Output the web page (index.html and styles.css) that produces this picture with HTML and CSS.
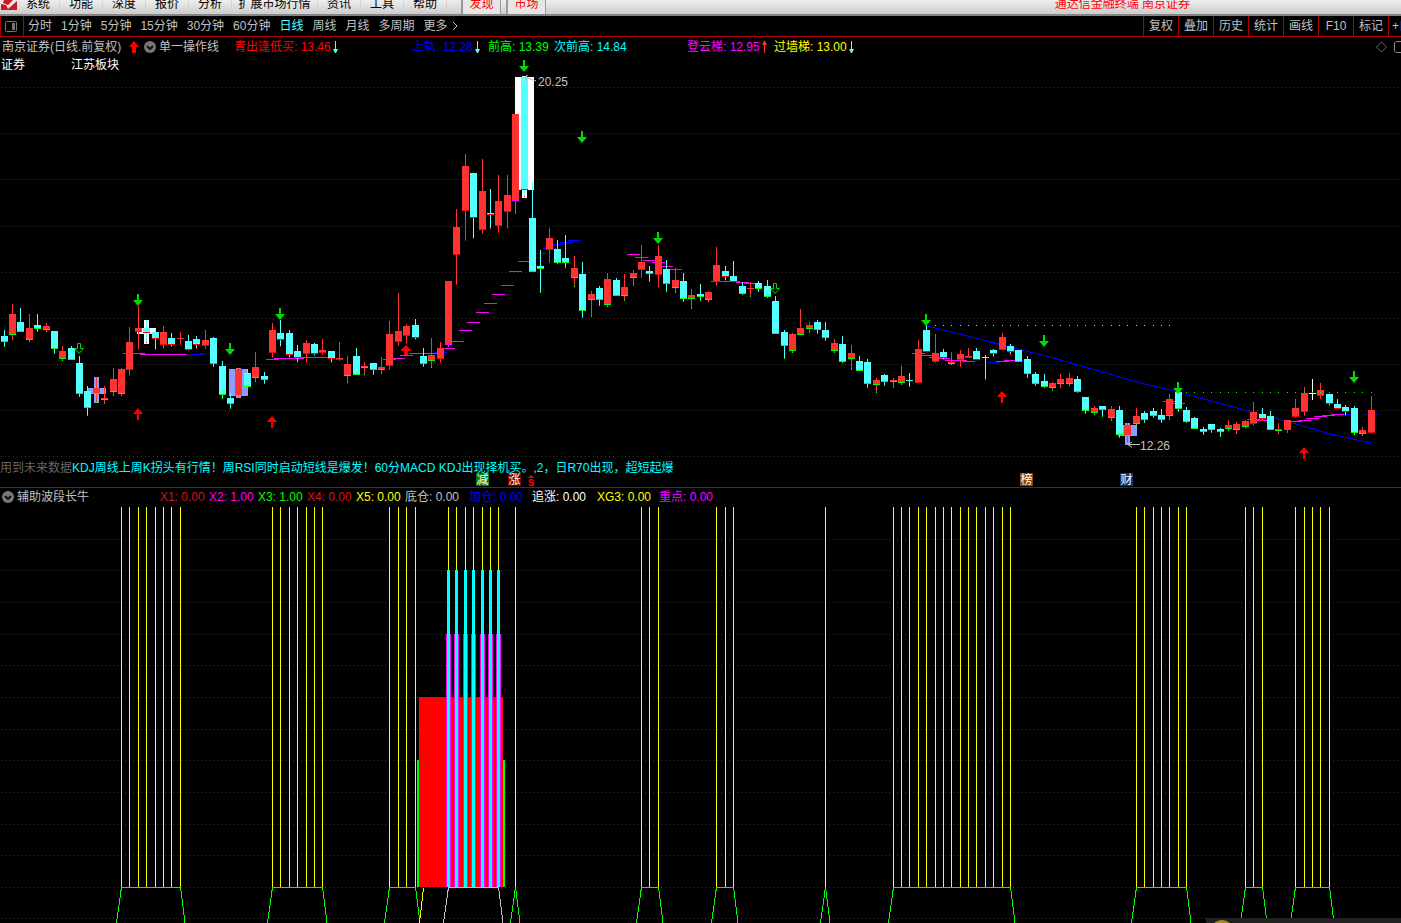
FILE: index.html
```html
<!DOCTYPE html>
<html lang="zh-CN">
<head>
<meta charset="utf-8">
<title>通达信金融终端 南京证券</title>
<link rel="stylesheet" href="styles.css">
</head>
<body>
<header class="menubar">
  <svg class="logo" width="17" height="11" viewBox="0 0 17 11" aria-hidden="true">
    <path fill="#cf1722" d="M1 0H17V10H1z"/>
    <path fill="#e8e8e8" d="M0 0H4L3 3L8 5L13 0H17V1L8 9L6 5L1 4z"/>
  </svg>
  <nav class="menu">
    <button>系统</button><button>功能</button><button>深度</button><button>报价</button><button>分析</button><button class="wide">扩展市场行情</button><button>资讯</button><button>工具</button><button>帮助</button>
  </nav>
  <div class="hot"><button>发现</button><button>市场</button></div>
  <h1 class="title">通达信金融终端 南京证券</h1>
</header>

<div class="toolbar">
  <button class="layout-toggle" aria-label="切换布局">
    <svg width="12" height="11" viewBox="0 0 12 11"><rect x=".5" y=".5" width="11" height="10" rx="1" fill="none" stroke="#777"/><path fill="#777" d="M7 2h3v7H7z"/></svg>
  </button>
  <nav class="periods">
    <button>分时</button><button>1分钟</button><button>5分钟</button><button>15分钟</button><button>30分钟</button><button>60分钟</button><button class="active">日线</button><button>周线</button><button>月线</button><button>多周期</button><button>更多<svg class="chev" width="6" height="10" viewBox="0 0 6 10"><path d="M1 1l4 4-4 4" fill="none" stroke="#c0c0c0"/></svg></button>
  </nav>
  <div class="tools">
    <button>复权</button><button>叠加</button><button>历史</button><button>统计</button><button>画线</button><button>F10</button><button>标记</button><button class="cut">+自</button>
  </div>
</div>

<main>
<section class="panel price">
  <div class="legend legend-price">
    <span>南京证券(日线.前复权)</span>
    <svg width="10" height="12" viewBox="0 0 10 12"><path fill="#f00" d="M5 0l5 6H7v6H3V6H0z"/></svg>
    <svg width="12" height="12" viewBox="0 0 12 12"><circle cx="6" cy="6" r="6" fill="#777"/><path d="M3 5l3 3 3-3" fill="none" stroke="#111" stroke-width="2"/></svg>
    <span>单一操作线</span>
    <span class="red">青出逢低买: 13.46<svg class="tick" width="5" height="12" viewBox="0 0 5 12"><path fill="#5ff" d="M2 0h1v8h2L3 12H2L0 8h2z"/></svg></span>
    <span class="blue">上轨: 12.28<svg class="tick" width="5" height="12" viewBox="0 0 5 12"><path fill="#5ff" d="M2 0h1v8h2L3 12H2L0 8h2z"/></svg></span>
    <span class="green">前高: 13.39</span>
    <span class="cyan">次前高: 14.84</span>
    <span class="magenta">登云梯: 12.95<svg class="tick" width="5" height="12" viewBox="0 0 5 12"><path fill="#f33" d="M2 12h1V4h2L3 0H2L0 4h2z"/></svg></span>
    <span class="yellow">过墙梯: 13.00<svg class="tick" width="5" height="12" viewBox="0 0 5 12"><path fill="#5ff" d="M2 0h1v8h2L3 12H2L0 8h2z"/></svg></span>
    <svg class="corner" width="25" height="12" viewBox="0 0 25 12"><path d="M5.500 1l5 5-5 5-5-5z" fill="none" stroke="#666"/><path d="M25 .5h-5l-1.500 1.500v8l1.500 1.500h5" fill="none" stroke="#888"/></svg>
  </div>
  <div class="plot">
    <svg id="price-chart" viewBox="0 56 1401 431" role="img" aria-label="日线K线图"></svg>
    <div class="tags"><span>证券</span><span>江苏板块</span></div>
    <p class="notice"><span>用到未来数据</span>KDJ周线上周K拐头有行情！周RSI同时启动短线是爆发！60分MACD KDJ出现择机买。,2，日R70出现，超短起爆</p>
  </div>
</section>

<section class="panel">
  <div class="legend legend-wave">
    <svg width="12" height="12" viewBox="0 0 12 12"><circle cx="6" cy="6" r="6" fill="#777"/><path d="M3 5l3 3 3-3" fill="none" stroke="#111" stroke-width="2"/></svg>
    <span>辅助波段长牛</span>
    <span class="crimson">X1: 0.00</span>
    <span class="magenta">X2: 1.00</span>
    <span class="green">X3: 1.00</span>
    <span class="crimson">X4: 0.00</span>
    <span class="yellow">X5: 0.00</span>
    <span>底仓: 0.00</span>
    <span class="blue">加仓: 0.00</span>
    <span class="white">追涨: 0.00</span>
    <span class="yellow">XG3: 0.00</span>
    <span class="magenta">重点: 0.00</span>
  </div>
  <div class="plot"><svg id="wave-chart" viewBox="0 505 1401 418" role="img" aria-label="辅助波段长牛"></svg></div>
</section>
</main>
<script src="chart.js"></script>
</body>
</html>
```

FILE: styles.css
```css
* { box-sizing: border-box; }
body {
  margin: 0;
  min-height: 100vh;
  overflow: hidden;
  background: #000;
  color: #c0c0c0;
  font: 12px/16px "Liberation Sans", "Noto Sans CJK SC", sans-serif;
}
button {
  margin: 0;
  padding: 0;
  border: 0;
  background: none;
  color: inherit;
  font: inherit;
  white-space: nowrap;
}
svg { display: block; }

.menubar {
  display: flex;
  height: 16px;
  overflow: hidden;
  background: linear-gradient(#eee, #ccc);
  border-bottom: 2px solid #858585;
  color: #000;
}
.logo { flex: none; }
.menu, .hot { display: flex; flex: none; }
.menu button { width: 43px; height: 16px; margin-top: -4px; border-right: 1px solid #d4d4d4; }
.menu .wide { width: 86px; }
.hot { margin-left: 14px; gap: 5px; color: #f00; }
.hot button {
  width: 40px;
  height: 18px;
  margin-top: -4px;
  padding-bottom: 2px;
  background: #e6e6e6;
  border-left: 2px solid #999;
  border-right: 1px solid #999;
}
.title {
  margin: -4px 211px 0 auto;
  color: #f00;
  font: inherit;
  white-space: nowrap;
}

.toolbar {
  display: flex;
  height: 21px;
  border-bottom: 1px solid #b00000;
  border-left: 1px solid #b00000;
  overflow: hidden;
}
.layout-toggle { width: 23px; padding-left: 4px; border-right: 1px solid #b00000; }
.periods { display: flex; gap: 9px; padding-left: 4px; }
.periods button { display: flex; align-items: center; }
.periods .chev { margin-left: 4px; }
.active { color: #5ff; }
.tools { display: flex; margin-left: auto; }
.tools button { width: 35px; border-left: 1px solid #b00000; }
.tools .cut { width: 13px; padding-left: 3px; overflow: hidden; text-align: left; }

.panel { border-bottom: 1px solid #b00000; }
.panel:last-child { border: 0; }
.legend { display: grid; align-items: center; height: 19px; white-space: nowrap; }
.legend span { display: flex; align-items: center; }
.legend .tick { margin-left: 2px; }
.legend-price {
  padding-left: 2px;
  grid-template-columns: 127px 15px 15px 75px 178px 76px 66px 133px 87px 1fr 25px;
}
.legend-wave {
  height: 17px;
  padding-left: 2px;
  grid-template-columns: 15px 143px 49px 49px 49px 49px 49px 64px 63px 65px 62px 1fr;
}
.red { color: #f00; }
.crimson { color: #d81414; }
.blue { color: #00f; }
.green { color: #0f0; }
.cyan { color: #0ff; }
.magenta { color: #f0f; }
.yellow { color: #ff0; }
.white { color: #fff; }

.plot { position: relative; }
.plot > svg { width: 100%; height: auto; }
.tags { position: absolute; top: 1px; left: 1px; display: flex; gap: 46px; color: #fff; }
.notice { position: absolute; bottom: 11px; left: 0; margin: 0; color: #0ff; white-space: nowrap; }
.notice span { color: #666; }

.value { fill: #c0c0c0; font-size: 12px; }
.badge { fill: #fff; font-size: 12px; text-anchor: middle; }
.sell { fill: #f00; font-size: 12px; font-weight: bold; text-anchor: middle; }
```

FILE: chart.js
```js
const NS = 'http://www.w3.org/2000/svg';
const RED = '#ff3232', CYAN = '#54ffff';

function add(svg, tag, attrs, text) {
  const el = document.createElementNS(NS, tag);
  for (const key in attrs) el.setAttribute(key, attrs[key]);
  if (text) el.textContent = text;
  svg.appendChild(el);
}
function rect(svg, x, y, width, height, fill) {
  add(svg, 'rect', { x, y, width, height, fill, 'shape-rendering': 'crispEdges' });
}
function line(svg, x1, y1, x2, y2, stroke) {
  add(svg, 'line', { x1, y1, x2, y2, stroke, 'shape-rendering': 'crispEdges' });
}
function gridRow(svg, y) {
  add(svg, 'path', { d: `M1 ${y + 0.5}H1399`, stroke: '#b00000', 'stroke-dasharray': '1 3', 'shape-rendering': 'crispEdges' });
}
const barX = i => Math.floor(4.1 + 8.3865 * i);

/* one bar per entry: kind + base colour, high, body top, body bottom, low */
const bars = `
cg 330 336 342 347|rg 304 314 335 340|cg 308 322 332 332|rg 314 328 340 342|cg 314 325 329 332|rg 323 326 330 332|cg 331 331 349 354|rg 346 351 359 361|cg 346 348 360 360|cg 356 363 394 397
cg 386 391 408 416|rg 377 388 394 403|rg 386 398 400 404|rg 368 379 392 396|rg 368 369 394 396|rr 327 342 370 376|rr 306 328 332 350|cr 320 328 333 343|cr 329 332 339 350|rr 326 332 345 349
cr 333 338 345 347|rr 332 338 339 345|cr 335 341 350 351|cr 336 339 345 349|rr 330 340 346 349|cg 337 338 364 367|cg 361 366 395 399|cg 393 398 404 409|rg 368 369 396 398|cg 369 373 387 389
rg 352 367 378 382|cg 372 376 380 384|rr 323 330 353 358|cr 320 333 340 347|cr 330 333 355 358|cr 345 351 358 363|rr 340 343 354 363|cr 343 344 354 356|rr 339 350 353 355|cr 351 351 359 363
rr 342 358 360 361|rg 356 364 376 383|cg 348 356 375 375|rg 362 366 368 375|cg 363 363 370 375|rg 357 367 370 374|rr 321 334 366 370|rr 293 331 342 346|rr 324 326 336 344|cr 319 325 338 340
cg 348 356 364 367|rg 338 355 361 368|rr 342 348 359 363|rm 281 281 345 347|rr 209 227 255 285|rr 154 166 211 241|cr 173 173 218 239|rr 159 191 230 234|cr 189 213 215 229|rr 175 201 226 233
rr 175 195 212 229|rm 114 114 201 214|cr 77 77 190 197|cg 182 218 272 272|cg 250 266 269 293|rr 228 238 250 263|cg 240 249 263 264|cg 235 258 263 268|rg 256 268 278 287|cg 262 274 311 318
rg 291 294 300 317|cg 286 288 300 306|rg 273 279 305 307|cg 278 280 296 296|rg 274 287 296 301|rg 270 273 278 286|rr 245 262 270 278|cg 266 271 274 282|rr 245 256 275 288|cg 260 269 284 292
rg 268 280 288 293|cg 273 281 299 302|rg 289 295 299 309|cg 284 294 297 301|rg 291 292 300 302|rr 247 265 282 286|cr 266 271 277 281|cr 261 276 282 282|cg 282 286 294 295|rg 282 288 289 297
cg 281 283 289 292|cg 280 286 297 298|cg 296 301 334 334|cg 330 332 346 359|rg 333 334 351 353|rg 309 328 335 335|rg 322 325 329 333|cg 320 322 330 334|cg 322 330 338 341|rg 339 343 351 353
cg 336 344 362 363|rg 345 353 359 370|cg 356 361 371 371|cg 359 362 384 388|rg 378 380 385 393|cg 374 375 382 386|rg 378 380 382 388|rg 366 376 383 385|cg 373 380 381 387|rr 340 349 383 383
cr 325 330 352 353|rr 334 353 362 363|cr 349 352 358 360|rg 352 362 364 365|rr 350 354 360 367|rr 348 356 358 358|cr 348 351 360 360|cr 355 357 358 380|cr 349 350 354 357|rr 333 337 350 350
cr 344 346 352 355|cg 350 350 362 362|cg 356 359 374 378|cg 372 374 384 386|cg 374 381 387 388|rg 382 383 388 391|rg 374 379 384 388|rg 373 378 384 386|cg 376 379 392 393|cg 397 397 411 414
rg 406 408 413 415|cg 406 406 410 417|rg 406 409 418 421|cg 406 410 435 438|rg 423 425 436 443|rg 408 416 424 425|cg 411 413 420 423|cg 408 411 416 418|cg 409 415 420 423|rg 394 399 416 420
cg 392 392 409 412|cg 407 410 422 423|cg 417 418 429 429|cg 427 429 432 435|cg 424 424 430 433|cg 428 429 432 437|rg 420 425 429 431|rg 422 424 430 434|rg 420 421 427 428|rr 402 412 424 426
cr 408 414 419 421|cg 411 416 430 430|rg 423 429 431 434|rm 420 420 430 433|rr 399 408 417 418|rr 387 393 412 416|ww 379 393 394 400|rr 383 390 396 399|cr 394 394 404 406|cr 399 404 409 409
cr 405 407 412 416|cg 406 408 433 435|rg 427 430 434 436|rr 396 410 433 434`
  .trim().split(/[\n|]/).map(s => s.split(' '));

const price = document.getElementById('price-chart');
[87, 133, 179, 226, 272, 318, 364, 410, 456].forEach(y => gridRow(price, y));

/* highlighted bars */
[
  [137, 328, 19, 6, '#fff'], [144, 320, 5, 24, '#fff'],
  [87, 388, 19, 6, '#8c9cff'], [94, 377, 5, 26, '#8c9cff'],
  [229, 369, 19, 27, '#8c9cff'], [236, 368, 5, 30, '#8c9cff'],
  [515, 77, 19, 113, '#fff'], [522, 76, 5, 122, '#fff'],
  [1118, 425, 19, 11, '#8c9cff'], [1125, 423, 5, 22, '#8c9cff']
].forEach(r => rect(price, ...r));

/* falling trend line */
add(price, 'path', { d: 'M927 326L1050 357L1137 382L1178 392L1215 402L1282 420L1330 434L1371 443', fill: 'none', stroke: '#00f', 'shape-rendering': 'crispEdges' });

/* ladder steps: x1, x2, y */
const magenta = [[123,145,353],[140,187,354],[266,279,359],[274,304,358],[300,328,357],[383,396,359],[393,405,358],[400,413,355],[409,437,353],[443,455,348],[451,464,341],[459,472,330],[467,480,322],[476,489,312],[484,497,303],[492,505,294],[501,514,285],[509,522,271],[518,531,261],[627,640,254],[635,648,257],[643,656,260],[652,665,262],[660,673,266],[669,682,269],[711,740,281],[736,749,282],[744,757,283],[912,925,353],[921,933,355],[929,940,357],[937,950,358],[945,967,360],[962,975,361],[996,1009,361],[1004,1017,360],[1163,1177,401],[1173,1185,403],[1247,1260,419],[1256,1267,420],[1290,1302,421],[1298,1311,420],[1306,1319,418],[1314,1327,416],[1322,1335,415],[1331,1344,414]];
const blue = [[191,204,354],[199,210,353],[434,447,352],[526,539,257],[534,547,253],[543,556,248],[552,564,244],[560,573,242],[568,581,240],[987,1000,362],[1015,1023,360],[1343,1351,414],[1365,1378,414]];
blue.forEach(([a, b, y]) => rect(price, a, y, b - a, 1, '#00f'));
magenta.forEach(([a, b, y]) => rect(price, a, y, b - a, 1, '#f0f'));

const fills = { c: CYAN, r: RED, w: '#fff' };
const bases = { g: '#0f0', r: '#f00', m: '#f0f', w: '#fff' };
bars.forEach(([kind, ...v], i) => {
  const [high, top, bottom, low] = v.map(Number);
  const x = barX(i), fill = fills[kind[0]], base = bases[kind[1]];
  rect(price, x, high, 1, low - high, fill);
  if (low > bottom) rect(price, x, low - 1, 1, 1, base);
  rect(price, x - 3, top, 7, bottom - top, fill);
  if (bottom - top > 1) rect(price, x - 3, bottom - 1, 7, 1, base);
});

for (let i = 111; i < 140; i++) rect(price, barX(i), 325, 1, 1, '#54ffff');
for (let i = 141; i < 164; i++) rect(price, barX(i), 392, 1, 1, '#0f0');

/* signals */
[[138,294],[230,343],[280,308],[524,60],[582,131],[658,232],[926,314],[1044,335],[1178,382],[1354,371]].forEach(([x, y]) =>
  add(price, 'path', { d: `M${x - 1} ${y}h2v6h4l-5 6l-5 -6h4z`, fill: '#00dc00' }));
[[138,408],[272,416],[1002,391],[1304,447]].forEach(([x, y]) =>
  add(price, 'path', { d: `M${x} ${y}l5 6h-4v6h-2v-6h-4z`, fill: '#f00' }));
add(price, 'path', { d: 'M406 345l5 5v1h-3v4h-4v-4h-3v-1z', fill: '#f00' });
[[79,343],[775,283]].forEach(([x, y]) =>
  add(price, 'path', { d: `M${x - 1.5} ${y + 0.5}h3v5h3l-4.500 5l-4.500 -5h3z`, fill: 'none', stroke: '#00dc00' }));

/* extremes */
add(price, 'path', { d: 'M536 81L525 77M528 75l-3 2l2 4M1140 444.500H1128M1132 442l-4 2.500l4 3', fill: 'none', stroke: '#c0c0c0' });
add(price, 'text', { x: 538, y: 86, class: 'value' }, '20.25');
add(price, 'text', { x: 1140, y: 450, class: 'value' }, '12.26');

[[476,'减','#087808'],[508,'涨','#800000'],[1020,'榜','#8c4600'],[1120,'财','#003c78']].forEach(([x, t, fill]) => {
  rect(price, x, 473, 13, 13, fill);
  add(price, 'text', { x: x + 6.5, y: 484, class: 'badge' }, t);
});
add(price, 'path', { d: 'M531 475l3 3h-6z', fill: '#f00' });
add(price, 'text', { x: 531, y: 486, class: 'sell' }, 's');

const wave = document.getElementById('wave-chart');
[539, 570, 602, 634, 665, 697, 729, 760, 792, 824, 855, 887, 918].forEach(y => gridRow(wave, y));
rect(wave, 417, 760, 88, 127, '#0f0');
rect(wave, 419, 697, 84, 190, '#f00');
[[14,21],[32,38],[46,49],[53,59],[61,61],[76,78],[85,87],[98,98],[106,120],[135,141],[148,150],[154,158]].forEach(([a, b]) => {
  const color = a === 53 ? '#c0c0c0' : '#0f0';
  for (let i = a; i <= b; i++) {
    rect(wave, barX(i), 507, 1, 380, '#ff0');
    if (a === 53) {
      rect(wave, barX(i) - 2, 634, 5, 253, '#f0f');
      rect(wave, barX(i) - 1, 570, 3, 317, '#0ff');
    }
  }
  const left = barX(a), right = barX(b);
  rect(wave, left, 887, right - left + 1, 1, color);
  line(wave, left + 0.5, 887, left - 4.5, 923, color);
  line(wave, right + 0.5, 887, right + 5, 923, color);
});
line(wave, 423.5, 888, 419.5, 923, '#ff0');
rect(wave, 1206, 918, 195, 5, '#222');
add(wave, 'path', { d: 'M1214 923Q1222 917 1230 923z', fill: '#a98a18' });
```
